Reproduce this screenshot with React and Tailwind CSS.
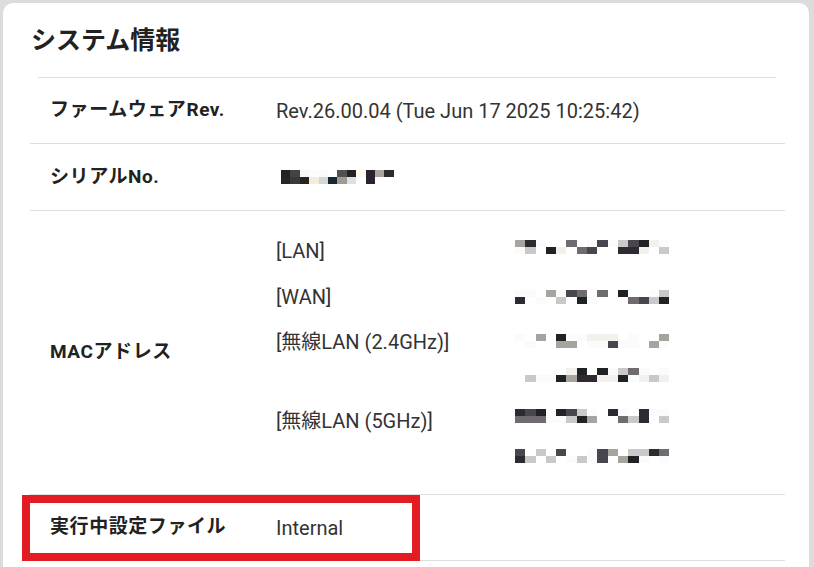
import React from 'react';

// モザイク（ぼかし済みの値）用の疑似乱数パレット
const shades = ['#ffffff', '#fbfbfb', '#f3f1ee', '#e2e2e2', '#c9c9c9', '#a7a39f', '#6f6b70', '#4a4650', '#2e2a32', '#1f2326'];

function makeCells(seed, count, density) {
    let s = seed;
    const out = [];
    for (let i = 0; i < count; i++) {
        s = (s * 9301 + 49297) % 233280;
        const r = s / 233280;
        let idx;
        if (r < 1 - density) idx = Math.floor(r * 4);
        else idx = 4 + Math.floor(((r - (1 - density)) / density) * 6);
        out.push(shades[Math.min(idx, shades.length - 1)]);
    }
    return out;
}

function Mosaic({ seed, cols = 15, cellW = 10.3, density = 0.5 }) {
    const top = makeCells(seed, cols, density);
    const bottom = makeCells(seed * 7 + 3, cols, density);
    return (
        <div className="flex flex-col">
            {[top, bottom].map((row, ri) => (
                <div key={ri} className="flex">
                    {row.map((c, i) => (
                        <span key={i} className="block h-[7px]" style={{ width: cellW, backgroundColor: c }} />
                    ))}
                </div>
            ))}
        </div>
    );
}

const serialTop = ['#222222', '#444444', '#f5f8fa', '#fafcfd', '#f8fbfc', '#ffffff', '#555050', '#222222', '#fff8ef', '#2a2430', '#a8a5a0', '#2a2c30'];
const serialBottom = ['#262626', '#353a3c', '#2a221e', '#f5ece0', '#d4d6d4', '#14282e', '#a09a94', '#e0e0e0', '#ffffff', '#2a2230', '#ffffff', '#ffffff'];

function SerialMosaic() {
    return (
        <div className="flex flex-col">
            {[serialTop, serialBottom].map((row, ri) => (
                <div key={ri} className="flex">
                    {row.map((c, i) => (
                        <span key={i} className="block h-[7px] w-[9.4px]" style={{ backgroundColor: c }} />
                    ))}
                </div>
            ))}
        </div>
    );
}

function Row({ label, children, className = '', valueClass = '' }) {
    return (
        <div className={`flex items-center border-b border-[#dedede] ${className}`}>
            <div className="w-[246px] shrink-0 pl-[20px] text-[19px] font-bold text-[#222] tracking-[0.03em]">{label}</div>
            <div className={`flex-1 text-[20px] text-[#333] ${valueClass}`}>{children}</div>
        </div>
    );
}

export default function App() {
    return (
        <div className="h-[567px] overflow-hidden bg-[#dcdcdc] pt-[3px] pl-[3px] pr-[5px] font-['Roboto','Noto_Sans_CJK_JP',sans-serif]">
            <div className="bg-white rounded-[10px] min-h-[600px] pl-[27px] pr-[24px] pt-[21px]">
                <h2 className="text-[25px] font-bold text-[#222] leading-[34px] pl-[1px]">システム情報</h2>
                <div className="mt-[19px] ml-[8px] mr-[9px] border-t border-[#dedede]" />

                <Row label="ファームウェアRev." className="h-[66px]">
                    Rev.26.00.04 (Tue Jun 17 2025 10:25:42)
                </Row>
                <Row label="シリアルNo." className="h-[67px]">
                    <div className="pl-[5px]"><SerialMosaic /></div>
                </Row>
                <Row label="MACアドレス" className="h-[284px]" valueClass="self-start pt-[28px]">
                    {/* MAC アドレス一覧 */}
                    <div className="flex flex-col">
                        <div className="flex">
                            <div className="w-[239px] leading-[24px]">[LAN]</div>
                            <div className="mt-[1px]"><Mosaic seed={11} density={0.45} /></div>
                        </div>
                        <div className="flex mt-[22px]">
                            <div className="w-[239px] leading-[24px]">[WAN]</div>
                            <div className="mt-[5px]"><Mosaic seed={27} density={0.55} /></div>
                        </div>
                        <div className="flex mt-[21px]">
                            <div className="w-[239px] leading-[24px]">[無線LAN (2.4GHz)]</div>
                            <div className="mt-[4px] flex flex-col gap-[20px]">
                                <Mosaic seed={53} density={0.4} />
                                <Mosaic seed={71} density={0.4} />
                            </div>
                        </div>
                        <div className="flex mt-[27px]">
                            <div className="w-[239px] leading-[24px]">[無線LAN (5GHz)]</div>
                            <div className="flex flex-col gap-[26px]">
                                <Mosaic seed={91} density={0.5} />
                                <Mosaic seed={113} density={0.6} />
                            </div>
                        </div>
                    </div>
                </Row>
                <div className="relative">
                    <Row label="実行中設定ファイル" className="h-[66px]">
                        Internal
                    </Row>
                    <div className="absolute left-[-8px] top-[0px] w-[398px] h-[66px] border-[8px] border-[#e31b23] pointer-events-none" />
                </div>
            </div>
        </div>
    );
}
